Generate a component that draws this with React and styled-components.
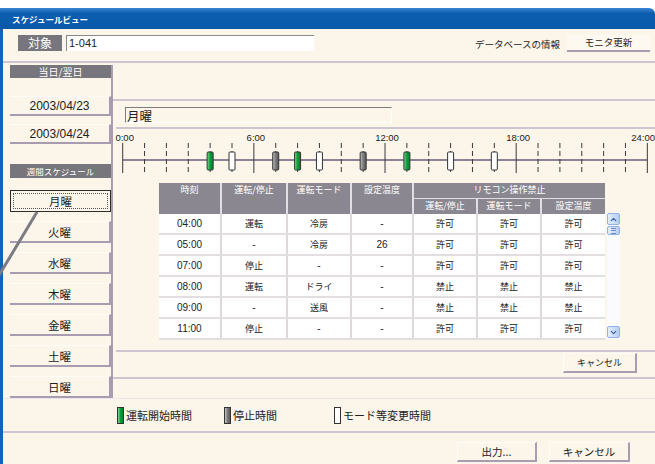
import React from 'react';
import styled, { createGlobalStyle } from 'styled-components';
import { ChevronUp, ChevronDown } from 'lucide-react';

const CREAM = '#fcf5ea';
const EDGE = '#a99cb1';
const LINE = '#cdc5cf';

const GlobalStyle = createGlobalStyle`
  html, body { margin: 0; padding: 0; background: #fff; }
  body { font-family: "Noto Sans CJK JP", "Liberation Sans", sans-serif; color: #222; }
`;

const Page = styled.div`
  position: relative;
  width: 655px;
  height: 464px;
  padding-top: 8px;
  box-sizing: border-box;
  overflow: hidden;
  background: #fff;
`;

const Window = styled.div`
  height: 456px;
  display: flex;
  flex-direction: column;
  background: ${CREAM};
  border-left: 3px solid #1862b5;
`;

const TitleBar = styled.div`
  height: 21px;
  flex: none;
  margin-left: -3px;
  padding-left: 12px;
  display: flex;
  align-items: center;
  background: linear-gradient(#3a86d6 0%, #0d5eb0 25%, #0a58a8 100%);
  border-top-right-radius: 6px;
  color: #fff;
  font-size: 8.5px;
  font-weight: bold;
`;

const TopRow = styled.div`
  height: 34px;
  flex: none;
  display: flex;
  align-items: flex-start;
  padding: 6px 5px 0 15px;
  box-sizing: border-box;
  border-bottom: 2px solid ${LINE};
`;

const Badge = styled.div`
  width: 44px;
  height: 16px;
  background: #77767c;
  color: #fff;
  font-size: 12px;
  line-height: 16px;
  text-align: center;
`;

const TextBox = styled.div`
  width: 248px;
  height: 16px;
  margin-left: 4px;
  box-sizing: border-box;
  background: #fff;
  border-top: 1px solid #8a8a8a;
  border-left: 1px solid #8a8a8a;
  padding-left: 2px;
  font-family: "Liberation Sans", sans-serif;
  font-size: 11px;
  line-height: 15px;
`;

const DbInfo = styled.div`
  margin-left: auto;
  margin-right: 7px;
  margin-top: 2px;
  font-size: 9.5px;
  line-height: 14px;
`;

const MonitorButton = styled.div`
  width: 83px;
  height: 17px;
  box-sizing: border-box;
  border-bottom: 2px solid ${EDGE};
  background: #fdf8f0;
  font-size: 9.5px;
  line-height: 15px;
  text-align: center;
`;

const Main = styled.div`
  height: 335px;
  flex: none;
  display: flex;
`;

const LeftCol = styled.div`
  width: 108px;
  flex: none;
  padding-left: 7px;
  box-sizing: border-box;
  display: flex;
  flex-direction: column;
`;

const SectionHead = styled.div`
  height: ${(p) => p.$h}px;
  margin-top: ${(p) => p.$mt}px;
  background: #77767c;
  color: #fff;
  font-size: ${(p) => p.$fs}px;
  line-height: ${(p) => p.$h}px;
  text-align: center;
`;

const TabButton = styled.div`
  height: ${(p) => p.$h}px;
  margin-top: ${(p) => p.$mt}px;
  box-sizing: border-box;
  display: flex;
  align-items: center;
  justify-content: center;
  font-family: "Liberation Sans", "Noto Sans CJK JP", sans-serif;
  font-size: ${(p) => p.$fs || 12}px;
  background: ${CREAM};
  border-right: 2px solid ${EDGE};
  border-bottom: 2px solid ${EDGE};
  border-top: 1px solid #fffdf8;
  ${(p) =>
    p.$active &&
    `
    border: 1px solid #2c2c2c;
    outline: 1px dotted #555;
    outline-offset: -4px;
  `}
`;

const RightPanel = styled.div`
  flex: 1;
  display: flex;
  flex-direction: column;
  border-left: 2px solid ${EDGE};
  margin-top: 2px;
`;

const TopBlank = styled.div`
  height: 34px;
  flex: none;
  border-bottom: 2px solid ${LINE};
`;

const FieldRow = styled.div`
  height: 26px;
  flex: none;
  padding: 6px 0 0 12px;
  box-sizing: border-box;
`;

const DayField = styled.div`
  width: 267px;
  height: 16px;
  box-sizing: border-box;
  border-top: 1px solid #7c7c7c;
  border-left: 1px solid #7c7c7c;
  border-right: 1px solid #fff;
  border-bottom: 1px solid #fff;
  padding-left: 1px;
  font-size: 12.5px;
  line-height: 15px;
`;

const Divider = styled.div`
  flex: none;
  margin-left: ${(p) => p.$ml || 0}px;
  margin-top: ${(p) => p.$mt || 0}px;
  border-top: 2px solid ${LINE};
`;

const Chart = styled.svg`
  display: block;
  flex: none;
`;

const TableArea = styled.div`
  display: flex;
  margin-top: 2px;
  padding-left: 46px;
`;

const Grid = styled.table`
  border-collapse: collapse;
  table-layout: fixed;
  width: 446px;
`;

const Head = styled.th`
  background: #8a8790;
  color: #fff;
  font-weight: normal;
  font-size: 9px;
  height: ${(p) => p.$h}px;
  padding: 0;
  vertical-align: top;
  line-height: 14px;
  border-right: 2px solid #e2dde3;
  border-bottom: ${(p) => (p.$sub ? '1px solid #e2dde3' : '0')};
  &:last-child { border-right: 0; }
`;

const Cell = styled.td`
  background: #fff;
  height: 19px;
  padding: 0;
  text-align: center;
  font-family: "Liberation Sans", "Noto Sans CJK JP", sans-serif;
  font-size: ${(p) => (p.$jp ? 9 : 10)}px;
  border-right: 2px solid #dcd8dc;
  border-bottom: 2px solid #e2dee2;
  &:last-child { border-right: 0; }
`;

const ScrollBar = styled.div`
  width: 13px;
  height: 126px;
  margin-top: 30px;
  margin-left: 2px;
  background: #fbfbfd;
  display: flex;
  flex-direction: column;
`;

const ScrollBtn = styled.div`
  width: 13px;
  height: ${(p) => p.$h}px;
  margin-top: ${(p) => p.$mt || 0}px;
  box-sizing: border-box;
  border: 1px solid #93b1e3;
  border-radius: 2px;
  background: linear-gradient(90deg, #e4eefc, #b6cef3);
  color: #3b63a8;
  display: flex;
  align-items: center;
  justify-content: center;
`;

const ThumbLines = styled.div`
  width: 5px;
  height: 4px;
  border-top: 1px solid #6e8fc8;
  border-bottom: 1px solid #6e8fc8;
  position: relative;
  &::after {
    content: '';
    position: absolute;
    left: 0;
    right: 0;
    top: 1px;
    border-top: 1px solid #6e8fc8;
  }
`;

const ButtonRow = styled.div`
  display: flex;
  justify-content: flex-end;
  padding: 1px ${(p) => p.$pr}px 0 0;
  gap: ${(p) => p.$gap || 0}px;
`;

const PlainButton = styled.div`
  width: ${(p) => p.$w}px;
  height: 20px;
  box-sizing: border-box;
  background: ${CREAM};
  border-top: 1px solid #fffdf8;
  border-left: 1px solid #fffdf8;
  border-right: 2px solid ${EDGE};
  border-bottom: 2px solid ${EDGE};
  font-size: ${(p) => p.$fs}px;
  line-height: 17px;
  text-align: center;
`;

const Legend = styled.div`
  height: 32px;
  flex: none;
  display: flex;
  align-items: center;
  padding-left: 114px;
  border-top: 1px solid #eee6ea;
  border-bottom: 2px solid ${LINE};
`;

const LegendItem = styled.div`
  width: ${(p) => (p.$w ? `${p.$w}px` : 'auto')};
  display: flex;
  align-items: center;
  font-size: 11px;
`;

const Swatch = styled.span`
  width: 5px;
  height: 15px;
  margin-right: 2px;
  border: 1px solid #333;
  background: ${(p) => p.$bg};
`;

const Footer = styled.div`
  flex: 1;
  padding-top: 8px;
`;

const Pointer = styled.svg`
  position: absolute;
  left: 0;
  top: 0;
  pointer-events: none;
`;

const FILL = {
  g: 'url(#gStart)',
  k: 'url(#gStop)',
  w: '#fff',
};

const SWATCH = {
  g: 'linear-gradient(90deg, #7fdc8c, #0c9c3c 50%, #07802e)',
  k: 'linear-gradient(90deg, #c8c8c8, #7a7a7a 50%, #5a5a5a)',
  w: '#fff',
};

const marks = [
  [4, 'g'], [5, 'w'], [7, 'k'], [8, 'g'], [9, 'w'],
  [11, 'k'], [13, 'g'], [15, 'w'], [17, 'w'],
];

const tickX = (h) => 9.7 + h * 21.86;

function Timeline() {
  const hours = Array.from({ length: 25 }, (_, i) => i);
  return (
    <Chart width="542" height="52" viewBox="0 0 542 52">
      <defs>
        <linearGradient id="gStart" x1="0" x2="1">
          <stop offset="0" stopColor="#80dc8c" />
          <stop offset="0.5" stopColor="#0c9c3c" />
          <stop offset="1" stopColor="#07802e" />
        </linearGradient>
        <linearGradient id="gStop" x1="0" x2="1">
          <stop offset="0" stopColor="#c4c4c4" />
          <stop offset="0.5" stopColor="#7a7a7a" />
          <stop offset="1" stopColor="#5a5a5a" />
        </linearGradient>
      </defs>
      {[0, 6, 12, 18, 24].map((h) => (
        <text
          key={`l${h}`}
          x={h === 24 ? 542 : tickX(h) + 2}
          y="12"
          textAnchor={h === 24 ? 'end' : 'middle'}
          fontSize="9.5"
          fontFamily="Liberation Sans, sans-serif"
          fill="#222"
        >
          {`${h}:00`}
        </text>
      ))}
      <line x1={tickX(0)} x2={tickX(24)} y1="31" y2="31" stroke="#8e8296" strokeWidth="2" />
      {hours.map((h) => (
        <line
          key={h}
          x1={tickX(h)}
          x2={tickX(h)}
          y1="14"
          y2="44"
          stroke="#3a3a3a"
          strokeWidth="1"
          strokeDasharray={h % 6 === 0 ? undefined : '5 3'}
        />
      ))}
      {marks.map(([h, k]) => (
        <rect
          key={`m${h}`}
          x={tickX(h) - 3}
          y="23"
          width="6"
          height="18"
          rx="1"
          fill={FILL[k]}
          stroke="#333"
          strokeWidth="1"
        />
      ))}
    </Chart>
  );
}

const rows = [
  ['04:00', '運転', '冷房', '-', '許可', '許可', '許可'],
  ['05:00', '-', '冷房', '26', '許可', '許可', '許可'],
  ['07:00', '停止', '-', '-', '許可', '許可', '許可'],
  ['08:00', '運転', 'ドライ', '-', '禁止', '禁止', '禁止'],
  ['09:00', '-', '送風', '-', '禁止', '禁止', '禁止'],
  ['11:00', '停止', '-', '-', '許可', '許可', '許可'],
];

const isJp = (s) => /[^\x00-\x7F]/.test(s);

function ScheduleTable() {
  return (
    <TableArea>
      <Grid>
        <colgroup>
          <col style={{ width: 62 }} />
          <col style={{ width: 66 }} />
          <col style={{ width: 64 }} />
          <col style={{ width: 62 }} />
          <col style={{ width: 64 }} />
          <col style={{ width: 64 }} />
          <col style={{ width: 64 }} />
        </colgroup>
        <thead>
          <tr>
            <Head rowSpan={2} $h={30}>時刻</Head>
            <Head rowSpan={2} $h={30}>運転/停止</Head>
            <Head rowSpan={2} $h={30}>運転モード</Head>
            <Head rowSpan={2} $h={30}>設定温度</Head>
            <Head colSpan={3} $h={15} $sub>リモコン操作禁止</Head>
          </tr>
          <tr>
            <Head $h={15}>運転/停止</Head>
            <Head $h={15}>運転モード</Head>
            <Head $h={15}>設定温度</Head>
          </tr>
        </thead>
        <tbody>
          {rows.map((r) => (
            <tr key={r[0]}>
              {r.map((c, i) => (
                <Cell key={i} $jp={isJp(c)}>{c}</Cell>
              ))}
            </tr>
          ))}
        </tbody>
      </Grid>
      <ScrollBar>
        <ScrollBtn $h={12}>
          <ChevronUp size={9} strokeWidth={3.5} />
        </ScrollBtn>
        <ScrollBtn $h={9} $mt={1}>
          <ThumbLines />
        </ScrollBtn>
        <ScrollBtn $h={12} $mt={91}>
          <ChevronDown size={9} strokeWidth={3.5} />
        </ScrollBtn>
      </ScrollBar>
    </TableArea>
  );
}

const days = ['月曜', '火曜', '水曜', '木曜', '金曜', '土曜', '日曜'];

export default function App() {
  return (
    <Page>
      <GlobalStyle />
      <Window>
        <TitleBar>スケジュールビュー</TitleBar>
        <TopRow>
          <Badge>対象</Badge>
          <TextBox>1-041</TextBox>
          <DbInfo>データベースの情報</DbInfo>
          <MonitorButton>モニタ更新</MonitorButton>
        </TopRow>
        <Main>
          <LeftCol>
            <SectionHead $h={13} $mt={2} $fs={10}>当日/翌日</SectionHead>
            <TabButton $h={20} $mt={18}>2003/04/23</TabButton>
            <TabButton $h={20} $mt={8}>2003/04/24</TabButton>
            <SectionHead $h={14} $mt={20} $fs={8.5}>週間スケジュール</SectionHead>
            {days.map((d, i) => (
              <TabButton key={d} $h={22} $mt={i === 0 ? 12 : 9} $fs={11.5} $active={i === 0}>
                {d}
              </TabButton>
            ))}
          </LeftCol>
          <RightPanel>
            <TopBlank />
            <FieldRow>
              <DayField>月曜</DayField>
            </FieldRow>
            <Divider $ml={3} />
            <Timeline />
            <ScheduleTable />
            <Divider $ml={3} $mt={10} />
            <ButtonRow $pr={18}>
              <PlainButton $w={74} $fs={9}>キャンセル</PlainButton>
            </ButtonRow>
            <Divider $mt={4} />
          </RightPanel>
        </Main>
        <Legend>
          <LegendItem $w={107}>
            <Swatch $bg={SWATCH.g} />
            運転開始時間
          </LegendItem>
          <LegendItem $w={110}>
            <Swatch $bg={SWATCH.k} />
            停止時間
          </LegendItem>
          <LegendItem>
            <Swatch $bg={SWATCH.w} />
            モード等変更時間
          </LegendItem>
        </Legend>
        <Footer>
          <ButtonRow $pr={25} $gap={12}>
            <PlainButton $w={80} $fs={10.5}>出力...</PlainButton>
            <PlainButton $w={81} $fs={10.5}>キャンセル</PlainButton>
          </ButtonRow>
        </Footer>
      </Window>
      <Pointer width="655" height="464">
        <line x1="37" y1="212" x2="-2" y2="277" stroke="#7c7c84" strokeWidth="3" />
      </Pointer>
    </Page>
  );
}
